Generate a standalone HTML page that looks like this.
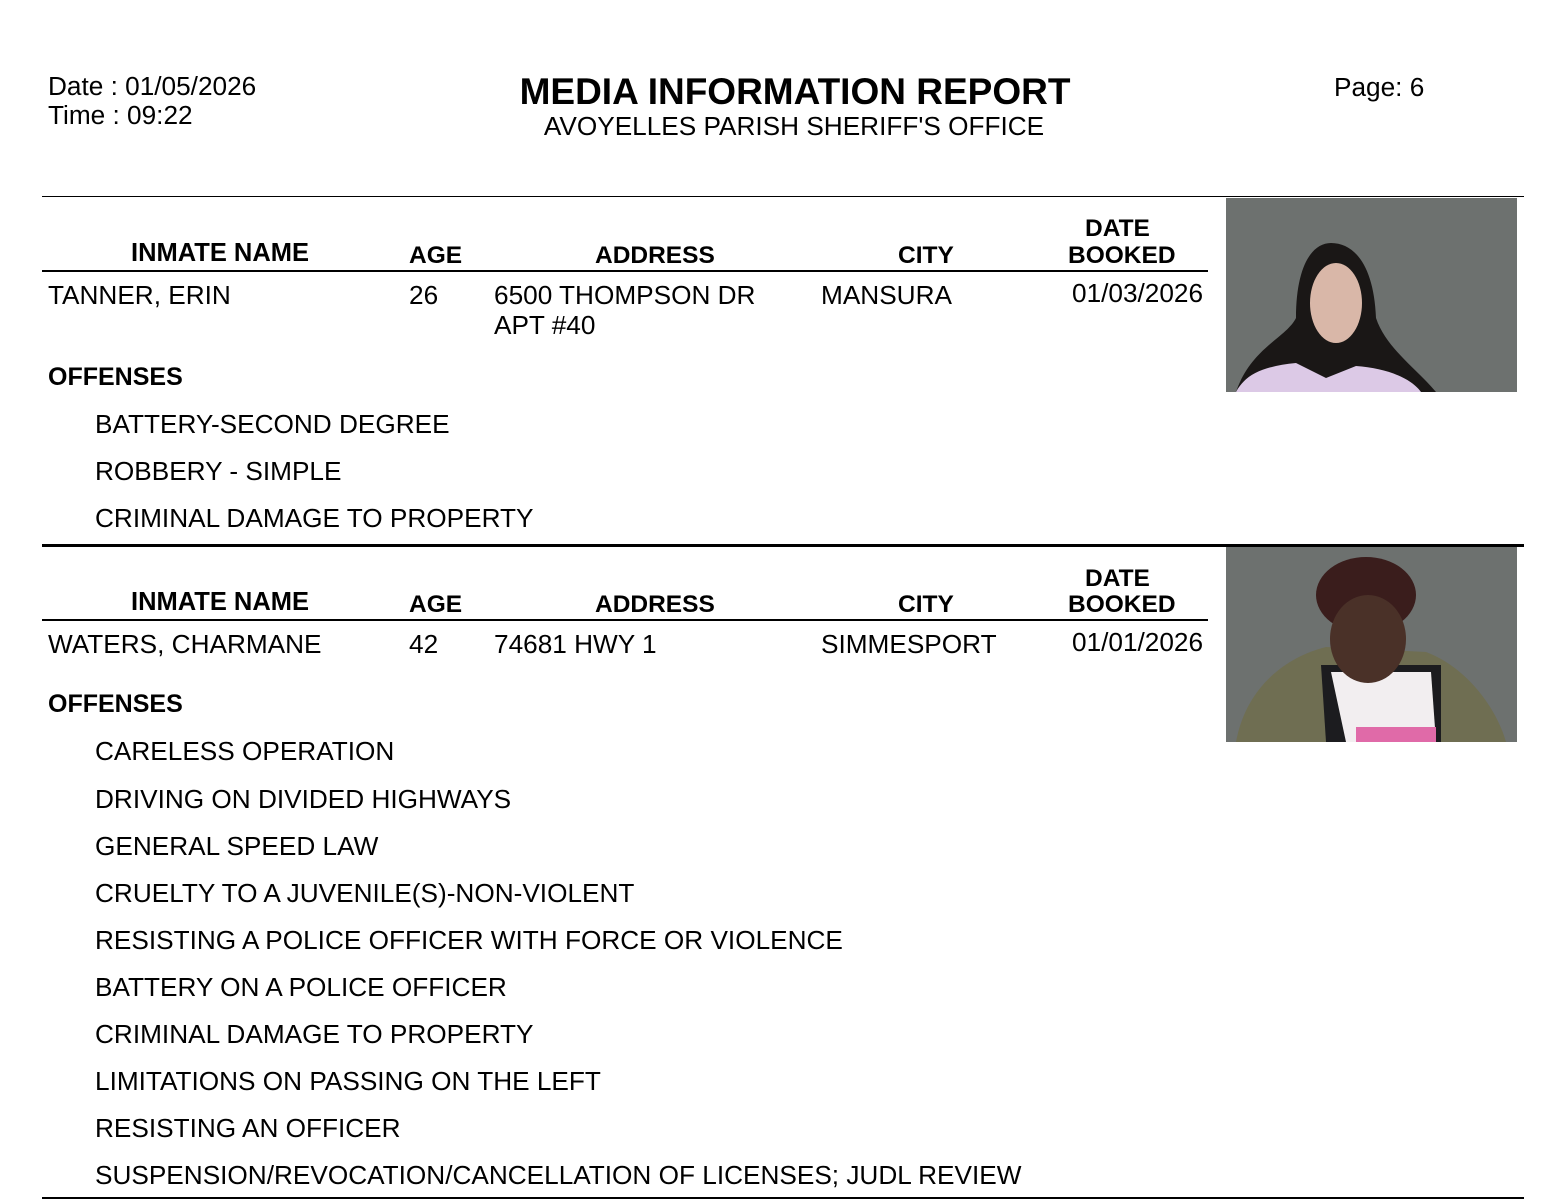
<!DOCTYPE html>
<html><head><meta charset="utf-8"><style>
body{margin:0;width:1568px;height:1202px;background:#fff;position:relative;font-family:"Liberation Sans",Arial,sans-serif;color:#000;overflow:hidden}
.a{position:absolute;white-space:nowrap;font-size:26.2px;line-height:28px}
.b{font-weight:bold}
.h{font-size:24.5px}
.l{position:absolute;background:#000}
.ph{position:absolute;background:#6d716f;overflow:hidden}
</style></head><body>
<div class="a" style="left:48px;top:72px">Date : 01/05/2026</div>
<div class="a" style="left:48px;top:101px">Time : 09:22</div>
<div class="a b" style="left:0;width:1590px;text-align:center;top:72px;font-size:37px;line-height:40px">MEDIA INFORMATION REPORT</div>
<div class="a" style="left:0;width:1588px;text-align:center;top:112px">AVOYELLES PARISH SHERIFF'S OFFICE</div>
<div class="a" style="left:1334px;top:73px">Page: 6</div>

<div class="l" style="left:42px;top:196px;width:1482px;height:1px"></div>

<div class="a b" style="left:131px;top:239px;font-size:25.5px">INMATE NAME</div>
<div class="a b h" style="left:409px;top:242px">AGE</div>
<div class="a b h" style="left:595px;top:242px">ADDRESS</div>
<div class="a b h" style="left:898px;top:242px">CITY</div>
<div class="a b h" style="left:1085px;top:215px">DATE</div>
<div class="a b h" style="left:1068px;top:242px">BOOKED</div>
<div class="l" style="left:42px;top:270px;width:1166px;height:2px"></div>
<div class="a" style="left:48px;top:281px">TANNER, ERIN</div>
<div class="a" style="left:409px;top:281px">26</div>
<div class="a" style="left:494px;top:281px">6500 THOMPSON DR</div>
<div class="a" style="left:494px;top:311px">APT #40</div>
<div class="a" style="left:821px;top:281px">MANSURA</div>
<div class="a" style="left:1072px;top:279px">01/03/2026</div>
<div class="a b" style="left:48px;top:363px;font-size:25px">OFFENSES</div>
<div class="a" style="left:95px;top:410px">BATTERY-SECOND DEGREE</div>
<div class="a" style="left:95px;top:457px">ROBBERY - SIMPLE</div>
<div class="a" style="left:95px;top:504px">CRIMINAL DAMAGE TO PROPERTY</div>
<div class="ph" style="left:1226px;top:198px;width:291px;height:194px">
<svg width="291" height="194"><path d="M10 194 C25 150 60 140 70 120 C70 70 85 45 105 45 C130 45 148 70 150 120 C160 150 190 170 210 194Z" fill="#1a1716"/><ellipse cx="110" cy="105" rx="26" ry="40" fill="#d9b7a8"/><path d="M10 194 C20 175 40 168 70 165 L100 180 L130 168 C160 170 185 180 195 194Z" fill="#dcc9e6"/></svg></div>

<div class="l" style="left:42px;top:544px;width:1482px;height:3px"></div>

<div class="a b" style="left:131px;top:588px;font-size:25.5px">INMATE NAME</div>
<div class="a b h" style="left:409px;top:591px">AGE</div>
<div class="a b h" style="left:595px;top:591px">ADDRESS</div>
<div class="a b h" style="left:898px;top:591px">CITY</div>
<div class="a b h" style="left:1085px;top:565px">DATE</div>
<div class="a b h" style="left:1068px;top:591px">BOOKED</div>
<div class="l" style="left:42px;top:619px;width:1166px;height:2px"></div>
<div class="a" style="left:48px;top:630px">WATERS, CHARMANE</div>
<div class="a" style="left:409px;top:630px">42</div>
<div class="a" style="left:494px;top:630px">74681 HWY 1</div>
<div class="a" style="left:821px;top:630px">SIMMESPORT</div>
<div class="a" style="left:1072px;top:628px">01/01/2026</div>
<div class="a b" style="left:48px;top:690px;font-size:25px">OFFENSES</div>
<div class="a" style="left:95px;top:737px">CARELESS OPERATION</div>
<div class="a" style="left:95px;top:785px">DRIVING ON DIVIDED HIGHWAYS</div>
<div class="a" style="left:95px;top:832px">GENERAL SPEED LAW</div>
<div class="a" style="left:95px;top:879px">CRUELTY TO A JUVENILE(S)-NON-VIOLENT</div>
<div class="a" style="left:95px;top:926px">RESISTING A POLICE OFFICER WITH FORCE OR VIOLENCE</div>
<div class="a" style="left:95px;top:973px">BATTERY ON A POLICE OFFICER</div>
<div class="a" style="left:95px;top:1020px">CRIMINAL DAMAGE TO PROPERTY</div>
<div class="a" style="left:95px;top:1067px">LIMITATIONS ON PASSING ON THE LEFT</div>
<div class="a" style="left:95px;top:1114px">RESISTING AN OFFICER</div>
<div class="a" style="left:95px;top:1161px">SUSPENSION/REVOCATION/CANCELLATION OF LICENSES; JUDL REVIEW</div>
<div class="ph" style="left:1226px;top:547px;width:291px;height:195px">
<svg width="291" height="195"><path d="M10 195 C20 140 60 110 100 100 L200 105 C240 120 270 160 280 195Z" fill="#6f6e52"/><path d="M95 118 L215 118 L215 195 L100 195Z" fill="#1c1c1f"/><path d="M105 125 L205 125 L210 195 L120 195Z" fill="#f2eef0"/><ellipse cx="140" cy="48" rx="50" ry="38" fill="#3a1d1c"/><ellipse cx="142" cy="92" rx="38" ry="44" fill="#4a3128"/><rect x="130" y="180" width="80" height="15" fill="#e06aa8"/></svg></div>

<div class="l" style="left:42px;top:1197px;width:1482px;height:2px"></div>
</body></html>
